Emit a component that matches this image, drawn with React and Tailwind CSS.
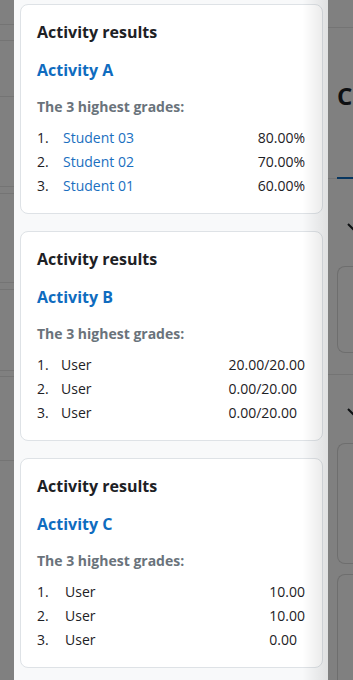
import React from "react";

const cards = [
  {
    name: "Activity A",
    cols: "grid-cols-[26px_1fr_auto]",
    link: true,
    rows: [
      ["1.", "Student 03", "80.00%"],
      ["2.", "Student 02", "70.00%"],
      ["3.", "Student 01", "60.00%"],
    ],
  },
  {
    name: "Activity B",
    cols: "grid-cols-[24px_1fr_auto]",
    link: false,
    rows: [
      ["1.", "User", "20.00/20.00"],
      ["2.", "User", "0.00/20.00"],
      ["3.", "User", "0.00/20.00"],
    ],
  },
  {
    name: "Activity C",
    cols: "grid-cols-[28px_1fr_auto]",
    link: false,
    rows: [
      ["1.", "User", "10.00"],
      ["2.", "User", "10.00"],
      ["3.", "User", "0.00"],
    ],
  },
];

function Card({ c }) {
  return (
    <div className="h-[210px] rounded-[8px] border border-[#dee2e6] bg-white px-[16px] pt-[15px]">
      <div className="text-[16px] font-bold leading-[24px] text-[#1d2125]">Activity results</div>
      <div className="mt-[14px] text-[16px] font-bold leading-[24px] text-[#0f6cbf]">{c.name}</div>
      <div className="mt-[14px] text-[14px] font-bold leading-[21px] text-[#6a737b]">The 3 highest grades:</div>
      <div className={`mt-[9px] grid ${c.cols} pr-[1px] text-[14px] leading-[24px] text-[#1d2125]`}>
        {c.rows.map((r, i) => (
          <React.Fragment key={i}>
            <div>{r[0]}</div>
            <div className={c.link ? "text-[#1a6fbf]" : ""}>{r[1]}</div>
            <div>{r[2]}</div>
          </React.Fragment>
        ))}
      </div>
    </div>
  );
}

export default function App() {
  return (
    <div
      className="flex h-[680px] w-[353px] overflow-hidden bg-[#808080]"
      style={{ fontFamily: '"Open Sans", "Noto Sans", sans-serif' }}
    >
      {/* left dimmed page */}
      <div className="relative w-[14px] shrink-0">
        <div className="mt-[24px] h-px bg-[#747474]" />
        <div className="mt-[15px] h-px bg-[#747474]" />
        <div className="mt-[55px] h-px bg-[#747474]" />
        <div className="mt-[89px] h-px bg-[#747474]" />
        <div className="mt-[6px] h-px bg-[#747474]" />
        <div className="mt-[88px] h-px bg-[#747474]" />
        <div className="mt-[6px] h-px bg-[#747474]" />
        <div className="mt-[80px] h-px bg-[#747474]" />
        <div className="mt-[5px] h-px bg-[#747474]" />
        <div className="mt-[83px] h-px bg-[#747474]" />
      </div>

      {/* drawer */}
      <div className="relative w-[314px] shrink-0 bg-[#f8f9fa]">
        <div className="flex flex-col gap-[17px] pl-[6px] pr-[5px] pt-[4px]">
          {cards.map((c) => (
            <Card key={c.name} c={c} />
          ))}
        </div>
        <div className="pointer-events-none absolute inset-y-0 right-0 w-[26px] bg-gradient-to-l from-black/10 to-transparent" />
      </div>

      {/* right dimmed page */}
      <div className="relative flex-1 overflow-hidden">
        <div className="mt-[27px] h-px bg-[#747474]" />
        <div className="ml-[9px] mt-[55px] whitespace-nowrap text-[24px] font-bold leading-[26px] text-[#0e1012]">C</div>
        <div className="mt-[68px] flex items-end">
          <div className="h-px w-[9px] bg-[#747474]" />
          <div className="h-[2px] flex-1 bg-[#073660]" />
        </div>
        <div className="ml-[19px] mt-[44px] text-[14px] leading-[14px] text-[#0e1012]">
          <svg width="12" height="8" viewBox="0 0 12 8"><path d="M1 1l5 5 5-5" fill="none" stroke="#0e1012" strokeWidth="2" /></svg>
        </div>
        <div className="ml-[9px] mt-[35px] h-[87px] rounded-l-[8px] border border-r-0 border-[#6e6e6e]" />
        <div className="mt-[21px] h-px bg-[#747474]" />
        <div className="ml-[19px] mt-[33px]">
          <svg width="12" height="8" viewBox="0 0 12 8"><path d="M1 1l5 5 5-5" fill="none" stroke="#0e1012" strokeWidth="2" /></svg>
        </div>
        <div className="ml-[9px] mt-[27px] h-[121px] rounded-l-[8px] border border-r-0 border-[#6e6e6e]" />
        <div className="ml-[9px] mt-[10px] h-[120px] rounded-l-[8px] border border-r-0 border-[#6e6e6e]" />
      </div>
    </div>
  );
}
